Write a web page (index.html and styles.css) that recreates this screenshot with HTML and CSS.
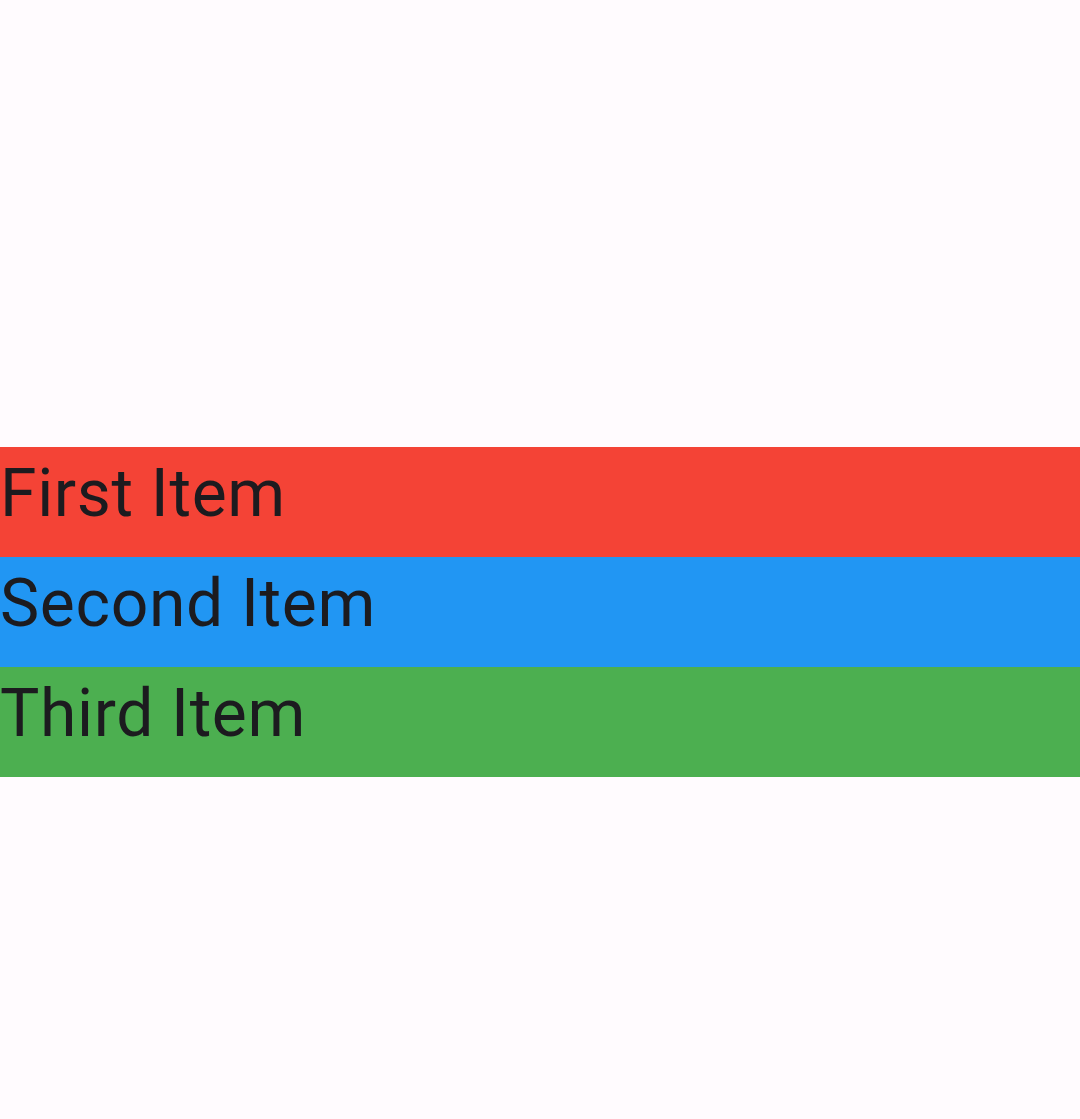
FILE: index.html
```html
<!DOCTYPE html>
<html>
<head>
<meta charset="utf-8">
<link rel="stylesheet" href="styles.css">
</head>
<body>
<main class="screen">
  <div class="list">
    <div class="item item-red">First Item</div>
    <div class="item item-blue">Second Item</div>
    <div class="item item-green">Third Item</div>
  </div>
</main>
</body>
</html>
```
FILE: styles.css
```css
html, body {
  margin: 0;
  padding: 0;
  background: #FFFBFE;
}
.screen {
  width: 1080px;
  height: 1119px;
  padding-top: 447px;
  box-sizing: border-box;
}
.list {
  display: flex;
  flex-direction: column;
}
.item {
  height: 110px;
  box-sizing: border-box;
  padding-top: 8px;
  font-family: Roboto, sans-serif;
  font-size: 66px;
  line-height: normal;
  letter-spacing: 0.65px;
  color: #1C1B1F;
}
.item-red { background: #F44336; }
.item-blue { background: #2196F3; }
.item-green { background: #4CAF50; }
```
